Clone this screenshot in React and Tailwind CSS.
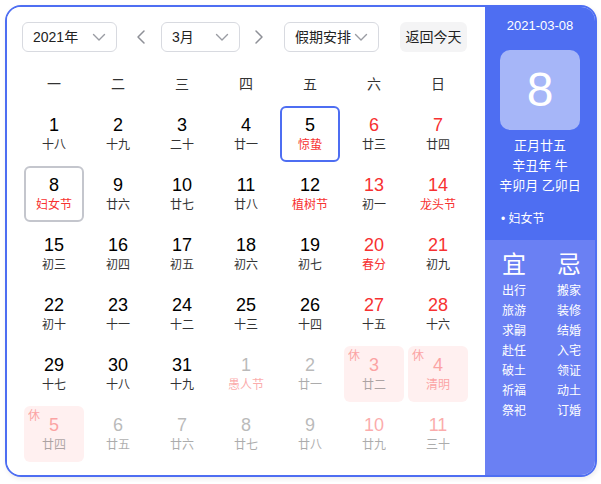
import React from "react";

const FONT = { fontFamily: '"Liberation Sans", "Noto Sans CJK SC", sans-serif' };

const ChevronDown = () => (
  <svg width="16" height="16" viewBox="0 0 16 16" fill="none">
    <path d="M2.5 5.5 L8 11 L13.5 5.5" stroke="#9a9ca3" strokeWidth="1.4" strokeLinecap="round" strokeLinejoin="round" />
  </svg>
);

const ChevronSide = ({ dir }) => (
  <svg width="10" height="16" viewBox="0 0 10 16" fill="none">
    {dir === "left" ? (
      <path d="M8 2 L2 8 L8 14" stroke="#8e9097" strokeWidth="1.5" strokeLinecap="round" strokeLinejoin="round" />
    ) : (
      <path d="M2 2 L8 8 L2 14" stroke="#8e9097" strokeWidth="1.5" strokeLinecap="round" strokeLinejoin="round" />
    )}
  </svg>
);

const Select = ({ label, w }) => (
  <div className={`${w} h-[30px] flex items-center justify-between pl-[10px] pr-[9px] border border-[#d8dae0] rounded-[6px] text-[14px] text-[#222]`}>
    <span>{label}</span>
    <ChevronDown />
  </div>
);

// [day, lunar, flags] flags: w=weekend, f=festival/term, o=other month, h=holiday rest
const rows = [
  [[1, "十八"], [2, "十九"], [3, "二十"], [4, "廿一"], [5, "惊蛰", "f sel"], [6, "廿三", "w"], [7, "廿四", "w"]],
  [[8, "妇女节", "f today"], [9, "廿六"], [10, "廿七"], [11, "廿八"], [12, "植树节", "f"], [13, "初一", "w"], [14, "龙头节", "w f"]],
  [[15, "初三"], [16, "初四"], [17, "初五"], [18, "初六"], [19, "初七"], [20, "春分", "w f"], [21, "初九", "w"]],
  [[22, "初十"], [23, "十一"], [24, "十二"], [25, "十三"], [26, "十四"], [27, "十五", "w"], [28, "十六", "w"]],
  [[29, "十七"], [30, "十八"], [31, "十九"], [1, "愚人节", "o f"], [2, "廿一", "o"], [3, "廿二", "o w h"], [4, "清明", "o w f h"]],
  [[5, "廿四", "o h"], [6, "廿五", "o"], [7, "廿六", "o"], [8, "廿七", "o"], [9, "廿八", "o"], [10, "廿九", "o w"], [11, "三十", "o w"]],
];

const Cell = ({ day, lunar, flags = "" }) => {
  const has = (k) => flags.split(" ").includes(k);
  const out = has("o");
  const redNum = has("w") || has("h");
  let box = "border-2 border-transparent";
  if (has("sel")) box = "border-2 border-[#4e6ef2]";
  if (has("today")) box = "border-2 border-[#c4c6cd]";
  const bg = has("h") ? "bg-[#fff0f0]" : "";
  return (
    <div className="h-[60px] flex items-center justify-center">
      <div className={`relative w-[60px] h-[56px] rounded-[6px] ${box} ${bg} flex flex-col items-center pt-[6px]`}>
        {has("h") && (
          <span className="absolute left-[2px] top-[0px] text-[12px] leading-[16px] text-[#f73131] opacity-40">休</span>
        )}
        <div className={`flex flex-col items-center ${out ? "opacity-40" : ""}`}>
          <span className={`text-[18px] leading-[22px] ${redNum ? "text-[#f73131]" : out ? "text-[#555]" : "text-black"}`}>{day}</span>
          <span className={`text-[12px] leading-[16px] mt-[1px] ${has("f") ? "text-[#f73131]" : "text-[#333]"}`}>{lunar}</span>
        </div>
      </div>
    </div>
  );
};

const yi = ["出行", "旅游", "求嗣", "赴任", "破土", "祈福", "祭祀"];
const ji = ["搬家", "装修", "结婚", "入宅", "领证", "动土", "订婚"];

export default function App() {
  return (
    <div className="p-[5px] bg-white" style={FONT}>
      <div className="w-[592px] h-[472px] flex border-2 border-[#4e6ef2] rounded-[16px] overflow-hidden shadow-[1px_2px_5px_rgba(0,0,0,0.08)]">
        {/* calendar side */}
        <div className="w-[478px] bg-white pt-[15px] px-[15px]">
          <div className="flex items-center h-[30px]">
            <Select label="2021年" w="w-[95px]" />
            <div className="w-[44px] flex justify-center pl-[4px]">
              <ChevronSide dir="left" />
            </div>
            <Select label="3月" w="w-[79px]" />
            <div className="w-[44px] flex justify-center pr-[6px]">
              <ChevronSide dir="right" />
            </div>
            <Select label="假期安排" w="w-[95px]" />
            <div className="ml-[21px] w-[67px] h-[30px] rounded-[6px] bg-[#f4f4f5] flex items-center justify-center text-[14px] text-[#222]">
              返回今天
            </div>
          </div>
          <div className="grid grid-cols-7 w-[448px] mt-[14px] h-[36px] items-center text-[14px] text-[#333]">
            {["一", "二", "三", "四", "五", "六", "日"].map((d) => (
              <div key={d} className="text-center">{d}</div>
            ))}
          </div>
          <div className="grid grid-cols-7 w-[448px] mt-[2px]">
            {rows.flat().map(([d, l, f], i) => (
              <div key={i} className="flex justify-center">
                <div className="w-[64px] flex justify-center">
                  <Cell day={d} lunar={l} flags={f} />
                </div>
              </div>
            ))}
          </div>
        </div>
        {/* detail side */}
        <div className="flex-1 flex flex-col text-white">
          <div className="h-[233px] bg-[#4e6ef2] flex flex-col items-center pt-[9px]">
            <div className="text-[13px] leading-[20px] text-center">2021-03-08</div>
            <div className="mt-[14px] w-[80px] h-[80px] rounded-[10px] bg-[#a6b6f8] flex items-center justify-center text-[48px] leading-none">
              8
            </div>
            <div className="mt-[6px] text-[13px] leading-[20px] text-center whitespace-nowrap">
              <div>正月廿五</div>
              <div>辛丑年 牛</div>
              <div>辛卯月 乙卯日</div>
            </div>
            <div className="self-start ml-[16px] mt-[13px] text-[12px] leading-[20px]">• 妇女节</div>
          </div>
          <div className="flex-1 bg-[#6a80f3] flex pl-[17px] gap-[31px] pt-[13px]">
            <div className="flex flex-col items-center">
              <div className="text-[24px] leading-[24px] mb-[4px]">宜</div>
              {yi.map((t) => (
                <div key={t} className="text-[12px] leading-[20px]">{t}</div>
              ))}
            </div>
            <div className="flex flex-col items-center">
              <div className="text-[24px] leading-[24px] mb-[4px]">忌</div>
              {ji.map((t) => (
                <div key={t} className="text-[12px] leading-[20px]">{t}</div>
              ))}
            </div>
          </div>
        </div>
      </div>
    </div>
  );
}
